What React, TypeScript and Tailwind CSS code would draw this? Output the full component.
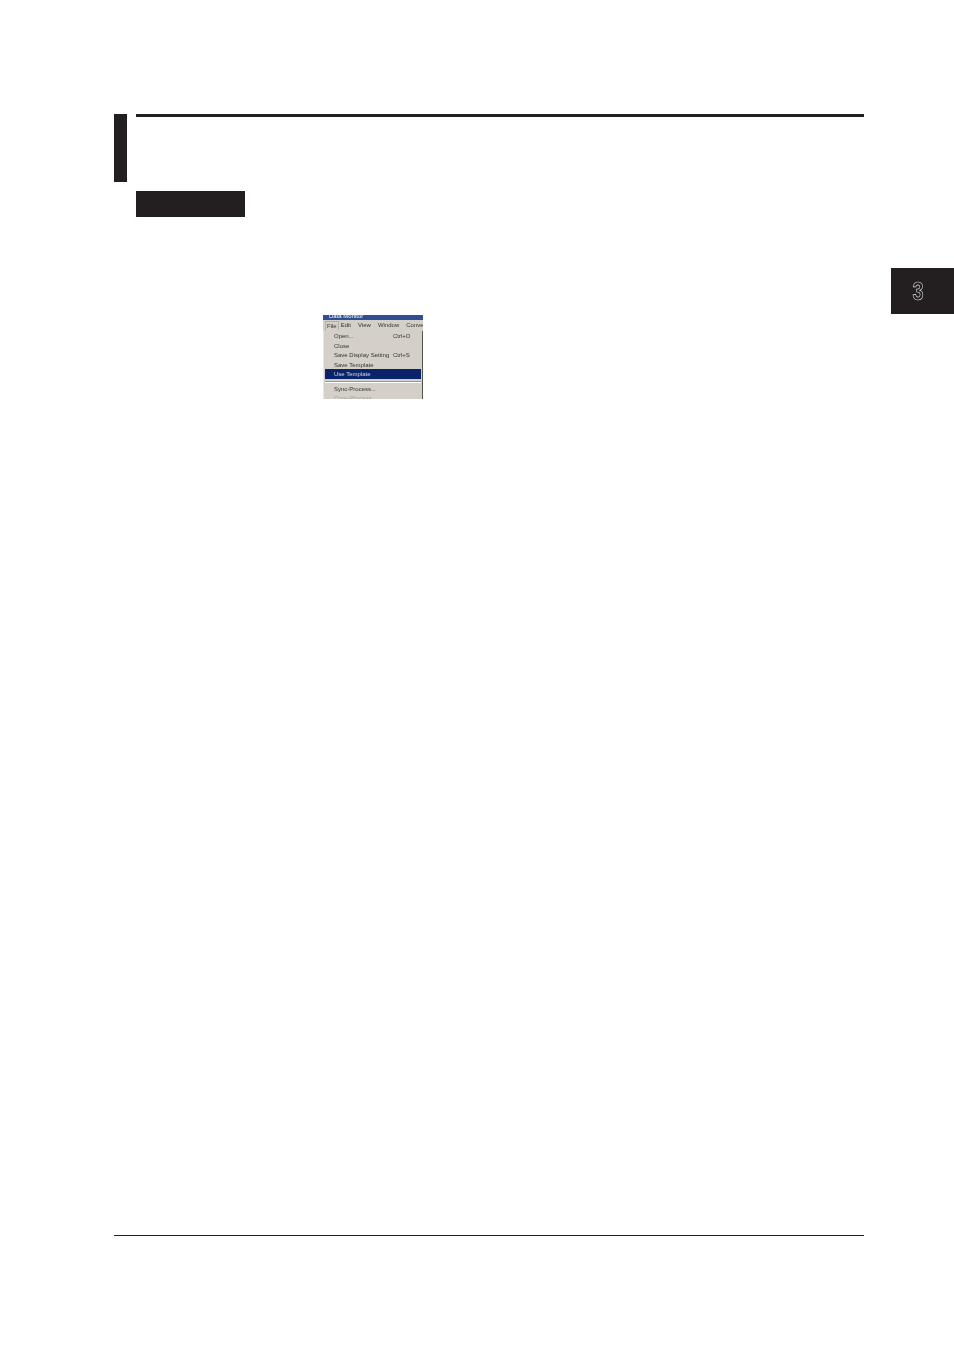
import React from 'react';

const menuItems = [
  { label: 'Open...', shortcut: 'Ctrl+O' },
  { label: 'Close' },
  { label: 'Save Display Setting', shortcut: 'Ctrl+S' },
  { label: 'Save Template' },
];

const MenuShot: React.FC = () => (
  <div className="w-[100px] h-[84px] overflow-hidden bg-[#d4d0c8] flex flex-col font-['Liberation_Sans',sans-serif] text-[6px] leading-[10.5px] text-[#333] blur-[0.35px]">
    <div className="h-[5px] shrink-0 bg-[#2f4f93] overflow-hidden text-white leading-[3px] pl-[6px]">Data Monitor</div>
    <div className="h-[11px] shrink-0 flex items-center gap-[7px] pl-[2px] whitespace-nowrap overflow-hidden">
      <span className="border border-[#b3b0a8] border-b-0 px-px leading-[8px] -mr-[5px]">File</span>
      <span>Edit</span>
      <span>View</span>
      <span>Window</span>
      <span>Conver</span>
    </div>
    <div className="flex-1 border-r border-r-[#55534f] border-l border-l-[#e8e6e0] px-px">
      {menuItems.map(item => (
        <div key={item.label} className="h-[9.5px] flex pl-[9px] whitespace-nowrap">
          <span className="w-[59px]">{item.label}</span>
          <span>{item.shortcut}</span>
        </div>
      ))}
      <div className="h-[9.5px] bg-[#0a246a] text-[#d8d8e8] pl-[9px]">Use Template</div>
      <div className="mt-[2px] h-[2px] border-t border-t-[#9a978f] border-b border-b-white" />
      <div className="mt-px h-[9.5px] pl-[9px]">Sync-Process...</div>
      <div className="h-[9.5px] pl-[9px] text-[#a3a09a]">Copy-Process...</div>
    </div>
  </div>
);

const App: React.FC = () => {
  return (
    <div className="w-[954px] h-[1350px] bg-white pt-[114px] overflow-hidden">
      {/* Section heading */}
      <div className="flex pl-[114px] gap-[9px]">
        <div className="w-[13px] h-[68px] bg-[#231f20]" />
        <div className="w-[728px] h-[3px] bg-[#231f20]" />
      </div>
      <div className="ml-[136px] mt-[9px] w-[109px] h-[26px] bg-[#231f20]" />

      {/* Chapter tab */}
      <div className="mt-[51px] flex justify-end">
        <div className="w-[63px] h-[46px] bg-[#231f20] flex items-center justify-center pr-[9px]">
          <span
            className="font-['Liberation_Sans',sans-serif] font-bold text-[25px] leading-none text-[#231f20] scale-x-[0.8]"
            style={{ WebkitTextStroke: '0.7px #d8d8d8' }}
          >
            3
          </span>
        </div>
      </div>

      <div className="mt-px ml-[323px]">
        <MenuShot />
      </div>

      {/* Footer rule */}
      <div className="mt-[836px] ml-[114px] w-[750px] h-px bg-[#231f20]" />
    </div>
  );
};

export default App;
